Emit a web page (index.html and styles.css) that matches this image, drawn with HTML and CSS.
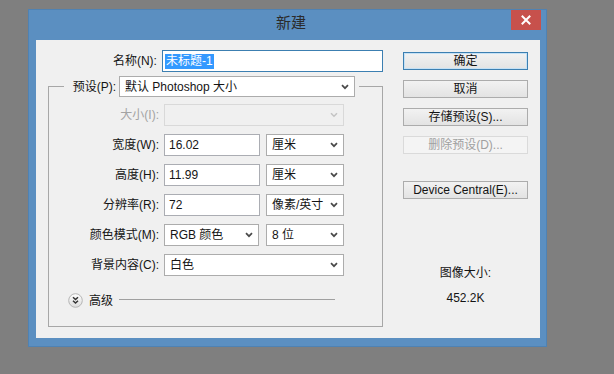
FILE: index.html
```html
<!DOCTYPE html>
<html lang="zh-CN">
<head>
<meta charset="utf-8">
<title>新建</title>
<link rel="stylesheet" href="styles.css">
</head>
<body>
<div class="window">
  <div class="titlebar">
    <span class="title">新建</span>
    <div class="close"><svg width="10" height="10" viewBox="0 0 10 10"><path d="M1.5 1.5 L8.5 8.5 M8.5 1.5 L1.5 8.5" stroke="#fff" stroke-width="2" stroke-linecap="square"/></svg></div>
  </div>
  <div class="client">
    <div class="left">
      <div class="row name-row">
        <span class="lbl">名称(N):</span>
        <div class="field text focus w-name"><span class="hl">未标题-1</span></div>
      </div>
      <fieldset class="group">
        <legend class="legend">
          <span class="lbl preset-lbl">预设(P):</span>
          <div class="field select w-preset"><span>默认 Photoshop 大小</span><svg class="chev" width="8" height="6" viewBox="0 0 8 6"><path d="M1 1.2 L4 4.2 L7 1.2" fill="none" stroke="#4a4a4a" stroke-width="1.7"/></svg></div>
        </legend>
        <div class="rows">
          <div class="row">
            <span class="lbl dis">大小(I):</span>
            <div class="field select disabled w-full"><span></span><svg class="chev" width="8" height="6" viewBox="0 0 8 6"><path d="M1 1.2 L4 4.2 L7 1.2" fill="none" stroke="#c4c4c4" stroke-width="1.5"/></svg></div>
          </div>
          <div class="row">
            <span class="lbl">宽度(W):</span>
            <div class="field text w-num">16.02</div>
            <div class="field select w-unit"><span>厘米</span><svg class="chev" width="8" height="6" viewBox="0 0 8 6"><path d="M1 1.2 L4 4.2 L7 1.2" fill="none" stroke="#4a4a4a" stroke-width="1.7"/></svg></div>
          </div>
          <div class="row">
            <span class="lbl">高度(H):</span>
            <div class="field text w-num">11.99</div>
            <div class="field select w-unit"><span>厘米</span><svg class="chev" width="8" height="6" viewBox="0 0 8 6"><path d="M1 1.2 L4 4.2 L7 1.2" fill="none" stroke="#4a4a4a" stroke-width="1.7"/></svg></div>
          </div>
          <div class="row">
            <span class="lbl">分辨率(R):</span>
            <div class="field text w-num">72</div>
            <div class="field select w-unit"><span>像素/英寸</span><svg class="chev" width="8" height="6" viewBox="0 0 8 6"><path d="M1 1.2 L4 4.2 L7 1.2" fill="none" stroke="#4a4a4a" stroke-width="1.7"/></svg></div>
          </div>
          <div class="row">
            <span class="lbl">颜色模式(M):</span>
            <div class="field select w-mode"><span>RGB 颜色</span><svg class="chev" width="8" height="6" viewBox="0 0 8 6"><path d="M1 1.2 L4 4.2 L7 1.2" fill="none" stroke="#4a4a4a" stroke-width="1.7"/></svg></div>
            <div class="field select w-bits"><span>8 位</span><svg class="chev" width="8" height="6" viewBox="0 0 8 6"><path d="M1 1.2 L4 4.2 L7 1.2" fill="none" stroke="#4a4a4a" stroke-width="1.7"/></svg></div>
          </div>
          <div class="row">
            <span class="lbl">背景内容(C):</span>
            <div class="field select w-full"><span>白色</span><svg class="chev" width="8" height="6" viewBox="0 0 8 6"><path d="M1 1.2 L4 4.2 L7 1.2" fill="none" stroke="#4a4a4a" stroke-width="1.7"/></svg></div>
          </div>
        </div>
        <div class="advanced">
          <svg class="adv-icon" width="15" height="15" viewBox="0 0 15 15">
            <defs><linearGradient id="g" x1="0" y1="0" x2="0" y2="1"><stop offset="0" stop-color="#ffffff"/><stop offset="1" stop-color="#dcdcdc"/></linearGradient></defs>
            <circle cx="7.5" cy="7.5" r="6.8" fill="url(#g)" stroke="#b5b5b5" stroke-width="1"/>
            <path d="M5 4.3 L7.5 6.6 L10 4.3 M5 7.8 L7.5 10.1 L10 7.8" fill="none" stroke="#333" stroke-width="1.5"/>
          </svg>
          <span class="adv-text">高级</span>
          <span class="adv-line"></span>
        </div>
      </fieldset>
    </div>
    <div class="right">
      <div class="btn default">确定</div>
      <div class="btn">取消</div>
      <div class="btn">存储预设(S)...</div>
      <div class="btn disabled">删除预设(D)...</div>
      <div class="btn device">Device Central(E)...</div>
      <div class="size-info">
        <div class="size-title">图像大小:</div>
        <div class="size-value">452.2K</div>
      </div>
    </div>
  </div>
</div>
</body>
</html>
```

FILE: styles.css
```css
* { box-sizing: border-box; }
html, body { margin: 0; padding: 0; }
body {
  background: #7f7f7f;
  width: 614px;
  height: 374px;
  overflow: hidden;
  font-family: "Liberation Sans", "Noto Sans CJK SC", sans-serif;
  font-size: 12px;
  color: #141414;
}
.window {
  margin: 9px 0 0 28px;
  width: 519px;
  height: 338px;
  background: #5b8fc1;
  border: 1px solid #4f82b3;
  padding: 0 6px 8px 7px;
  display: flex;
  flex-direction: column;
}
.titlebar {
  height: 30px;
  display: grid;
  grid-template-columns: 1fr;
  position: relative;
}
.title {
  justify-self: center;
  padding: 3px 0 0 6px;
  font-family: "Noto Sans CJK SC", sans-serif;
  font-size: 15px;
  line-height: 18px;
  color: #2b2b2b;
}
.close {
  position: absolute;
  right: -1px;
  top: 0;
  width: 30px;
  height: 20px;
  background: #c7514c;
  display: flex;
  align-items: center;
  justify-content: center;
}
.client {
  flex: 1;
  background: #f0f0f0;
  display: flex;
  gap: 20px;
  padding-top: 10px;
}
.left { width: 347px; }
.row {
  display: flex;
  align-items: center;
  height: 22px;
}
.lbl {
  width: 110px;
  text-align: right;
  margin-right: 5px;
  white-space: nowrap;
  line-height: 16px;
}
.name-row .lbl { width: 122px; }
.lbl.dis { color: #a3a3a3; }
.field {
  height: 22px;
  border: 1px solid #abadb3;
  background: #fff;
  display: flex;
  align-items: center;
  padding: 0 4px;
  line-height: 16px;
  white-space: nowrap;
}
.field.focus { border-color: #3c7fb1; padding-left: 2px; }
.hl { background: #3399ff; color: #fff; padding: 0 1px; line-height: 15px; }
.select { justify-content: space-between; border-color: #acacac; padding: 0 5px 0 5px; }
.select.disabled { background: #f0f0f0; border-color: #d9d9d9; }
.chev { flex: none; }
.w-name { width: 223px; }
.w-preset { width: 236px; height: 21px; }
.w-full { width: 180px; }
.w-num { width: 96px; margin-right: 6px; }
.w-unit { width: 78px; }
.w-mode { width: 95px; margin-right: 7px; }
.w-bits { width: 78px; }
.group {
  margin: 4px 0 0 12px;
  width: 335px;
  height: 251px;
  padding: 0;
  border: 1px solid #a7a7a7;
  min-width: 0;
}
.legend {
  margin-left: 15px;
  padding: 0 4px;
  display: flex;
  align-items: center;
  height: 21px;
}
.preset-lbl { width: 48px; margin-right: 3px; }
.rows {
  margin-top: 7px;
  display: flex;
  flex-direction: column;
  gap: 8px;
}
.advanced {
  margin: 17px 0 0 19px;
  display: flex;
  align-items: center;
  height: 15px;
}
.adv-icon { flex: none; }
.adv-text { margin-left: 6px; line-height: 16px; }
.adv-line {
  margin-left: 6px;
  width: 216px;
  height: 1px;
  background: #a0a0a0;
  margin-top: -2px;
}
.right {
  width: 125px;
  padding-top: 2px;
  display: flex;
  flex-direction: column;
}
.btn {
  height: 18px;
  border: 1px solid #acacac;
  background: linear-gradient(#f2f2f2, #e3e3e3);
  text-align: center;
  line-height: 16px;
  margin-bottom: 10px;
  white-space: nowrap;
}
.btn.default { border-color: #3c7fb1; box-shadow: inset 0 0 0 1px #c5e1f5; }
.btn.disabled { background: #f4f4f4; border-color: #dadada; color: #a0a0a0; }
.btn.device { margin-top: 17px; }
.size-info {
  margin-top: 56px;
  text-align: center;
  line-height: 16px;
}
.size-value { margin-top: 9px; }
```
